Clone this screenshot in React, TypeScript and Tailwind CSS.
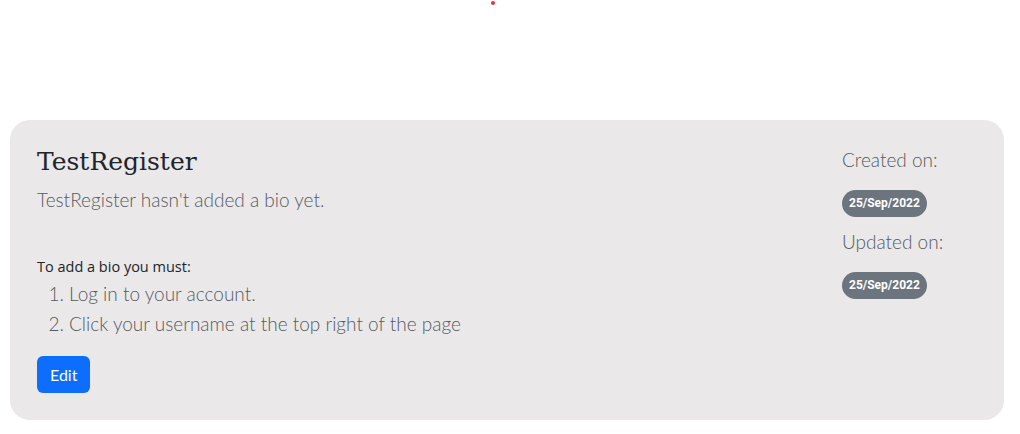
export default function App() {
  return (
    <div className="min-h-[434px] bg-white font-['Lato',sans-serif]">
      {/* top marker */}
      <div className="flex h-[120px] justify-center">
        <div className="ml-[-35px] mt-px h-[4px] w-[4px] rounded-full bg-[#dc3545]" />
      </div>

      <div className="ml-[10px] mr-[16px] flex h-[300px] rounded-[20px] bg-[#eae8e9] pl-[27px] pr-[24px] pt-[24px]">
        <div className="flex-1">
          <h1 className="font-['DejaVu_Serif',serif] text-[25px] leading-[36px] text-[#212529]">
            TestRegister
          </h1>
          <p className="mt-[6px] text-[19px] font-light leading-[28px] text-[#555b61]">
            TestRegister hasn't added a bio yet.
          </p>

          <p className="mt-[41px] font-['Open_Sans',sans-serif] text-[14.5px] leading-[24px] text-[#212529]">
            To add a bio you must:
          </p>
          <ol className="list-decimal pl-[32px] text-[19px] font-light leading-[30px] text-[#555b61]">
            <li>Log in to your account.</li>
            <li>Click your username at the top right of the page</li>
          </ol>

          <button className="mt-[17px] h-[37px] rounded-[6px] bg-[#0d6efd] px-[13px] text-[16px] text-white">
            Edit
          </button>
        </div>

        <div className="-ml-[6px] w-[138px]">
          <p className="mt-[2px] text-[19px] font-light leading-[28px] text-[#555b61]">Created on:</p>
          <span className="mt-[16px] inline-block rounded-full bg-[#6c757d] px-[7px] py-[6px] font-['Roboto',sans-serif] text-[12px] font-bold leading-[15px] text-white">
            25/Sep/2022
          </span>
          <p className="mt-[11px] text-[19px] font-light leading-[28px] text-[#555b61]">Updated on:</p>
          <span className="mt-[16px] inline-block rounded-full bg-[#6c757d] px-[7px] py-[6px] font-['Roboto',sans-serif] text-[12px] font-bold leading-[15px] text-white">
            25/Sep/2022
          </span>
        </div>
      </div>
    </div>
  );
}
